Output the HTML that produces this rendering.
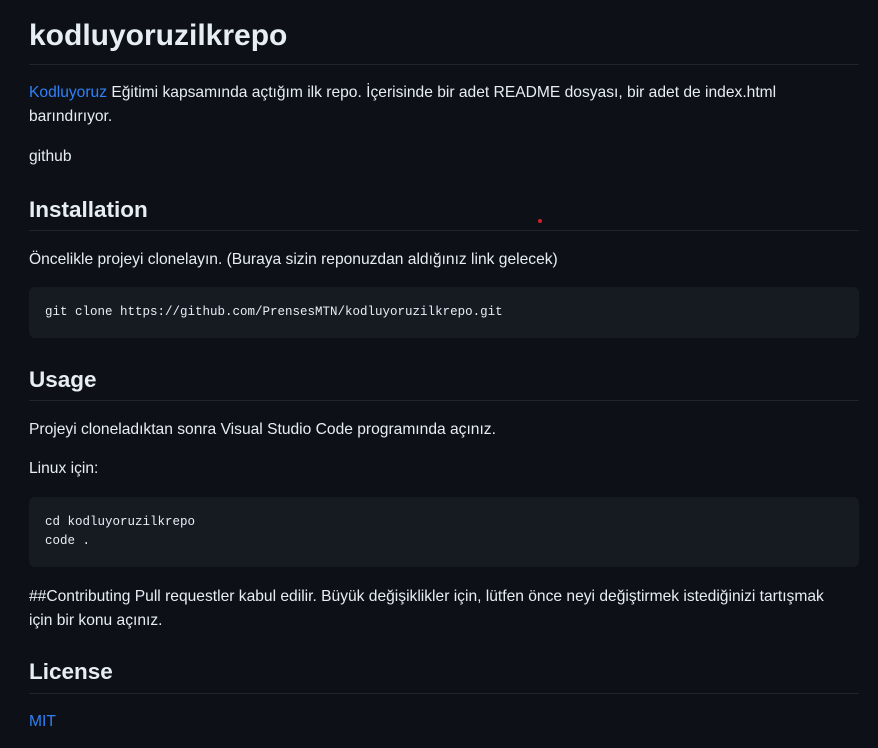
<!DOCTYPE html>
<html><head><meta charset="utf-8"><style>
html,body{margin:0;padding:0;background:#0d1117;width:878px;height:748px;overflow:hidden}
body{position:relative;font-family:"Liberation Sans",sans-serif;color:#e6edf3}
.a{position:absolute;left:29px;white-space:nowrap}
p.a{margin:0;font-size:15.6px;line-height:24px}
.h1{font-size:30px;font-weight:bold;line-height:40px}
.h2{font-size:22.5px;font-weight:bold;line-height:30px}
.hr{position:absolute;left:29px;width:830px;height:1px;background:#21262d}
.code{position:absolute;left:29px;width:830px;background:#161b22;border-radius:6px}
.code pre{margin:0;position:absolute;left:16px;font-family:"Liberation Mono",monospace;font-size:12.5px;line-height:19px;color:#e6edf3}
a{color:#2f81f7;text-decoration:none}
</style></head><body>
<div class="a h1" style="top:16px">kodluyoruzilkrepo</div>
<div class="hr" style="top:64px"></div>
<p class="a" style="top:81px"><a>Kodluyoruz</a> Eğitimi kapsamında açtığım ilk repo. İçerisinde bir adet README dosyası, bir adet de index.html</p>
<p class="a" style="top:105px">barındırıyor.</p>
<p class="a" style="top:145px">github</p>
<div class="a h2" style="top:195px">Installation</div>
<div class="hr" style="top:230px"></div>
<div style="position:absolute;left:538px;top:219px;width:4px;height:4px;border-radius:2px;background:#d0202a"></div>
<p class="a" style="top:248px">Öncelikle projeyi clonelayın. (Buraya sizin reponuzdan aldığınız link gelecek)</p>
<div class="code" style="top:287px;height:51px"><pre style="top:16px">git clone https://github.com/PrensesMTN/kodluyoruzilkrepo.git</pre></div>
<div class="a h2" style="top:365px">Usage</div>
<div class="hr" style="top:400px"></div>
<p class="a" style="top:418px">Projeyi cloneladıktan sonra Visual Studio Code programında açınız.</p>
<p class="a" style="top:457px">Linux için:</p>
<div class="code" style="top:497px;height:70px"><pre style="top:16px">cd kodluyoruzilkrepo
code .</pre></div>
<p class="a" style="top:585px">##Contributing Pull requestler kabul edilir. Büyük değişiklikler için, lütfen önce neyi değiştirmek istediğinizi tartışmak</p>
<p class="a" style="top:609px">için bir konu açınız.</p>
<div class="a h2" style="top:657px">License</div>
<div class="hr" style="top:693px"></div>
<p class="a" style="top:710px"><a>MIT</a></p>
</body></html>
